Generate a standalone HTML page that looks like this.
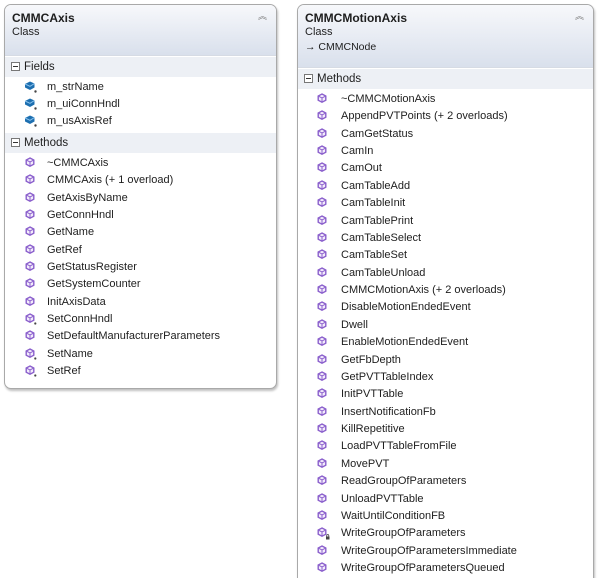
<!DOCTYPE html>
<html style="width:601px;height:578px;overflow:hidden"><head><meta charset="utf-8"><style>
*{margin:0;padding:0;box-sizing:border-box}
body{width:601px;height:578px;background:#fff;font-family:"Liberation Sans",sans-serif;font-size:11px;color:#1e1e1e;position:relative;overflow:hidden}
.box{position:absolute;border:1px solid #a9a9a9;border-radius:7px;background:#fff;box-shadow:1px 2px 2px rgba(0,0,0,.25);overflow:hidden}
.hd{background:linear-gradient(#f7f8fb,#d9e0ec);border-bottom:1px solid #d6dbe4;position:relative}
.t{position:absolute;left:7px;font-weight:bold;font-size:12px}
.s{position:absolute;left:7px}
.car{position:absolute;right:9px;top:4px;font-size:9px;color:#777}
.sec{position:absolute;left:0;right:0;height:21px;background:#edf0f5;border-top:1px solid #fff}
.sec span{position:absolute;left:19px;top:4px;font-size:11.5px}
.sec i{position:absolute;left:6px;top:5px;width:9px;height:9px;border:1px solid #777;background:#fff}
.sec i:after{content:"";position:absolute;left:1px;top:3px;width:5px;height:1px;background:#333}
.r{position:absolute;white-space:nowrap}
.r svg{position:absolute;top:-1px}
</style></head><body>
<div class="box" style="left:4px;top:4px;width:273px;height:385px">
 <div class="hd" style="height:51px"><div class="t" style="top:6px">CMMCAxis</div><div class="s" style="top:21px">Class</div><div class="car">︽</div></div>
 <div class="sec" style="top:51px"><i></i><span>Fields</span></div>
 <div class="sec" style="top:127px"><i></i><span>Methods</span></div>
 <div id="L"></div>
</div>
<div class="box" style="left:297px;top:4px;width:297px;height:590px">
 <div class="hd" style="height:63px"><div class="t" style="top:6px">CMMCMotionAxis</div><div class="s" style="top:21px">Class</div><div class="s" style="top:36px;font-size:10.5px">→ CMMCNode</div><div class="car">︽</div></div>
 <div class="sec" style="top:63px"><i></i><span>Methods</span></div>
 <div id="R"></div>
</div>
<script>
function m(b){return '<svg width="14" height="14" viewBox="0 0 14 14"><path d="M6 2 L9.8 4 V8.2 L6 10.2 L2.2 8.2 V4Z" fill="#f3ecfb" stroke="#8a5fcc" stroke-width="1.4"/><path d="M2.5 4.2 L6 6 L9.5 4.2 M6 6 V10" fill="none" stroke="#8a5fcc" stroke-width="1"/>'+(b=='d'?'<circle cx="11.3" cy="11.5" r="1.1" fill="#444"/>':b=='l'?'<rect x="10" y="10.5" width="3.5" height="3" fill="#444"/><path d="M10.7 10.5 V9.6 A1.05 1.05 0 0 1 12.8 9.6 V10.5" fill="none" stroke="#444" stroke-width=".8"/>':'')+'</svg>'}
function f(){return '<svg width="14" height="14" viewBox="0 0 14 14"><path d="M1 4 L6 1.5 L10.5 3.5 V7.5 L6 10 L1 7.5Z" fill="#1d6fb0"/><path d="M1 4 L6 6.3 L10.5 3.5" fill="none" stroke="#8cc4ee" stroke-width="1"/><circle cx="11.5" cy="11.5" r="1.2" fill="#444"/></svg>'}
var L='';
['m_strName','m_uiConnHndl','m_usAxisRef'].forEach(function(s,i){L+='<div class="r" style="left:19px;top:'+(76+i*17.2)+'px">'+f()+'<span style="position:absolute;left:23px">'+s+'</span></div>'});
[['~CMMCAxis'],['CMMCAxis (+ 1 overload)'],['GetAxisByName'],['GetConnHndl'],['GetName'],['GetRef'],['GetStatusRegister'],['GetSystemCounter'],['InitAxisData'],['SetConnHndl','d'],['SetDefaultManufacturerParameters'],['SetName','d'],['SetRef','d']].forEach(function(a,i){L+='<div class="r" style="left:19px;top:'+(152+i*17.33)+'px">'+m(a[1])+'<span style="position:absolute;left:23px">'+a[0]+'</span></div>'});
document.getElementById('L').innerHTML=L;
var R='';
['~CMMCMotionAxis','AppendPVTPoints (+ 2 overloads)','CamGetStatus','CamIn','CamOut','CamTableAdd','CamTableInit','CamTablePrint','CamTableSelect','CamTableSet','CamTableUnload','CMMCMotionAxis (+ 2 overloads)','DisableMotionEndedEvent','Dwell','EnableMotionEndedEvent','GetFbDepth','GetPVTTableIndex','InitPVTTable','InsertNotificationFb','KillRepetitive','LoadPVTTableFromFile','MovePVT','ReadGroupOfParameters','UnloadPVTTable','WaitUntilConditionFB','WriteGroupOfParameters','WriteGroupOfParametersImmediate','WriteGroupOfParametersQueued'].forEach(function(s,i){R+='<div class="r" style="left:18px;top:'+(88+i*17.37)+'px">'+m(i==25?'l':'')+'<span style="position:absolute;left:25px">'+s+'</span></div>'});
document.getElementById('R').innerHTML=R;
</script>
</body></html>
